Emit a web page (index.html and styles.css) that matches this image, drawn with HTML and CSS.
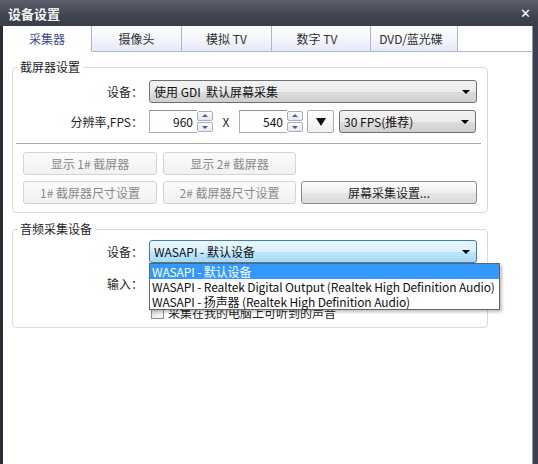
FILE: index.html
```html
<!DOCTYPE html>
<html>
<head>
<meta charset="utf-8">
<link rel="stylesheet" href="styles.css">
</head>
<body>
<div class="window">
  <div class="titlebar">
    <span class="title">设备设置</span>
    <span class="close">✕</span>
  </div>
  <div class="frame">
    <div class="tabs">
      <div class="tab t1 active">采集器</div>
      <div class="tab t2">摄像头</div>
      <div class="tab t3">模拟 TV</div>
      <div class="tab t4">数字 TV</div>
      <div class="tab t5">DVD/蓝光碟</div>
      <div class="tab-fill"></div>
    </div>
    <div class="panel">
      <fieldset class="group g1">
        <legend>截屏器设置</legend>
        <div class="row">
          <span class="lbl">设备：</span>
          <div class="combo wide">使用 GDI&nbsp; 默认屏幕采集<span class="arrow"></span></div>
        </div>
        <div class="row r2">
          <span class="lbl">分辨率,FPS：</span>
          <div class="spin">
            <div class="spin-input">960</div>
            <div class="spin-btns"><span class="sb up"></span><span class="sb dn"></span></div>
          </div>
          <span class="times">X</span>
          <div class="spin">
            <div class="spin-input">540</div>
            <div class="spin-btns"><span class="sb up"></span><span class="sb dn"></span></div>
          </div>
          <div class="dropbtn"><span class="tri"></span></div>
          <div class="combo fps">30 FPS(推荐)<span class="arrow"></span></div>
        </div>
        <div class="sep"></div>
        <div class="btnrow">
          <div class="btn dis b1">显示 1# 截屏器</div>
          <div class="btn dis b2">显示 2# 截屏器</div>
        </div>
        <div class="btnrow r-b2">
          <div class="btn dis b1">1# 截屏器尺寸设置</div>
          <div class="btn dis b2">2# 截屏器尺寸设置</div>
          <div class="btn b3">屏幕采集设置...</div>
        </div>
      </fieldset>
      <fieldset class="group g2">
        <legend>音频采集设备</legend>
        <div class="row">
          <span class="lbl">设备：</span>
          <div class="combo-wrap">
            <div class="combo wide focus">WASAPI - 默认设备<span class="arrow"></span></div>
            <ul class="droplist">
              <li class="sel">WASAPI - 默认设备</li>
              <li>WASAPI - Realtek Digital Output (Realtek High Definition Audio)</li>
              <li>WASAPI - 扬声器 (Realtek High Definition Audio)</li>
            </ul>
          </div>
        </div>
        <div class="row r-in">
          <span class="lbl">输入：</span>
        </div>
        <div class="check-row">
          <span class="checkbox"></span>
          <span class="check-text">采集在我的电脑上可听到的声音</span>
        </div>
      </fieldset>
    </div>
  </div>
</div>
</body>
</html>
```

FILE: styles.css
```css
html, body {
  margin: 0;
  padding: 0;
  background: #ffffff;
}
body {
  font-family: "Noto Sans CJK SC", "Noto Sans", sans-serif;
  font-size: 12px;
  color: #1e1e1e;
}
.window {
  width: 538px;
  height: 464px;
  display: flex;
  flex-direction: column;
  overflow: hidden;
}
.titlebar {
  height: 26px;
  flex: none;
  background: linear-gradient(#5b5f6c, #40444f 60%, #3a3e49);
  display: flex;
  align-items: center;
  justify-content: space-between;
  padding: 0 7px 0 8px;
  box-sizing: border-box;
}
.title {
  color: #f4f4f4;
  font-weight: bold;
  font-size: 13px;
}
.close {
  color: #ffffff;
  font-weight: bold;
  font-size: 13px;
  font-family: "DejaVu Sans", sans-serif;
}
.frame {
  flex: 1;
  background: #ffffff;
  border-left: 3px solid #2b2e37;
  border-right: 5px solid #3d414d;
  box-shadow: inset -1px 0 0 #8d93a3;
  display: flex;
  flex-direction: column;
}
.tabs {
  display: flex;
  height: 26px;
  flex: none;
}
.tab {
  box-sizing: border-box;
  height: 26px;
  border-right: 1px solid #aeb6cf;
  border-bottom: 1px solid #aeb6cf;
  background: linear-gradient(#ffffff, #f4f6fb 50%, #e6eaf5);
  display: flex;
  align-items: center;
  justify-content: center;
  color: #303030;
  font-size: 12px;
}
.tab.active {
  background: #ffffff;
  border-bottom-color: #ffffff;
  color: #3d4890;
}
.t1 { width: 89px; }
.t2 { width: 90px; }
.t3 { width: 90px; }
.t4 { width: 99px; padding-right: 8px; }
.t5 { width: 87px; padding-right: 6px; }
.tab-fill {
  flex: 1;
  border-bottom: 1px solid #aeb6cf;
}
.panel {
  flex: 1;
  padding: 0 0 0 9px;
}
.group {
  width: 476px;
  box-sizing: border-box;
  margin: 7px 0 0 0;
  border: 1px solid #d3dce2;
  border-radius: 4px;
  padding: 0 6px 8px 3px;
  min-width: 0;
}
.group legend {
  padding: 0 3px;
  margin-left: 1px;
  line-height: 16px;
  color: #1e1e1e;
}
.g1 .row:first-of-type { margin-top: 5px; }
.g2 { margin-top: 8px; }
.g2 .row:first-of-type { margin-top: 3px; }
.row {
  display: flex;
  align-items: center;
  height: 23px;
}
.r2 { margin-top: 7px; }
.lbl {
  width: 127px;
  text-align: right;
  flex: none;
  margin-right: 6px;
  color: #1e1e1e;
}
.combo {
  position: relative;
  box-sizing: border-box;
  height: 23px;
  border: 1px solid #707070;
  border-radius: 3px;
  background: linear-gradient(#f2f2f2, #ebebeb 50%, #dddddd 51%, #cfcfcf);
  display: flex;
  align-items: center;
  padding-left: 4px;
  color: #111;
}
.combo.wide { width: 328px; }
.combo.fps { width: 137px; margin-left: 5px; }
.combo.focus {
  border-color: #3c7fb1;
  background: linear-gradient(#eaf6fd, #d9f0fc 50%, #bee6fd 51%, #a7d9f5);
}
.arrow {
  position: absolute;
  right: 6px;
  top: 9px;
  width: 0;
  height: 0;
  border-left: 4px solid transparent;
  border-right: 4px solid transparent;
  border-top: 4px solid #000;
}
.spin {
  display: flex;
  height: 23px;
  flex: none;
}
.spin-input {
  box-sizing: border-box;
  width: 48px;
  height: 23px;
  border: 1px solid #abadb3;
  border-top-color: #8e9097;
  border-right: none;
  background: #fff;
  text-align: right;
  padding-right: 4px;
  line-height: 21px;
  color: #111;
}
.spin-btns {
  width: 16px;
  display: flex;
  flex-direction: column;
  gap: 1px;
  padding-top: 1px;
}
.sb {
  position: relative;
  box-sizing: border-box;
  height: 10px;
  border: 1px solid #a8aebc;
  border-radius: 2px;
  background: linear-gradient(#fbfcfe, #e3e8f2);
}
.sb::after {
  content: "";
  position: absolute;
  left: 4px;
  width: 0;
  height: 0;
  border-left: 3px solid transparent;
  border-right: 3px solid transparent;
}
.sb.up::after { top: 2px; border-bottom: 3px solid #4d6185; }
.sb.dn::after { top: 3px; border-top: 3px solid #4d6185; }
.times {
  width: 26px;
  text-align: center;
  flex: none;
  color: #1e1e1e;
}
.dropbtn {
  box-sizing: border-box;
  width: 27px;
  height: 23px;
  margin-left: 4px;
  border: 1px solid #acacac;
  border-radius: 2px;
  background: linear-gradient(#ffffff, #f0f0f0);
  display: flex;
  align-items: center;
  justify-content: center;
}
.tri {
  width: 0;
  height: 0;
  border-left: 5px solid transparent;
  border-right: 5px solid transparent;
  border-top: 8px solid #111;
}
.sep {
  margin-top: 10px;
  height: 0;
  border-top: 1px solid #a5a5a5;
  border-bottom: 1px solid #ffffff;
}
.btnrow {
  display: flex;
  margin-top: 7px;
  padding-left: 7px;
}
.btnrow.r-b2 { margin-top: 6px; }
.btn {
  box-sizing: border-box;
  height: 23px;
  border-radius: 3px;
  display: flex;
  align-items: center;
  justify-content: center;
  flex: none;
}
.btn.dis {
  border: 1px solid #d2d4d6;
  background: linear-gradient(#fbfbfb, #f1f1f1);
  color: #8a8a8a;
}
.b1 { width: 134px; }
.b2 { width: 133px; margin-left: 6px; }
.b3 {
  width: 176px;
  margin-left: 5px;
  border: 1px solid #8a8a8a;
  background: linear-gradient(#fbfbfb, #f0f0f0 50%, #e6e6e6 51%, #dcdcdc);
  color: #1e1e1e;
}
.combo-wrap {
  position: relative;
}
.droplist {
  position: absolute;
  left: 0;
  top: 23px;
  width: 351px;
  box-sizing: border-box;
  margin: 0;
  padding: 0;
  list-style: none;
  background: #ffffff;
  border: 1px solid #646464;
  box-shadow: 2px 2px 3px rgba(0, 0, 0, 0.25);
  z-index: 5;
}
.droplist li {
  height: 15px;
  line-height: 15px;
  padding-left: 2px;
  white-space: nowrap;
  letter-spacing: -0.12px;
  color: #111;
}
.droplist li.sel {
  background: #3399ff;
  color: #ffffff;
}
.r-in { margin-top: 9px; height: 22px; }
.check-row {
  display: flex;
  align-items: center;
  margin-top: 11px;
  height: 14px;
  padding-left: 135px;
}
.checkbox {
  box-sizing: border-box;
  width: 13px;
  height: 13px;
  border: 1px solid #8f8f8f;
  background: linear-gradient(135deg, #dcdcdc, #fbfbfb);
  margin-right: 4px;
  flex: none;
}
.check-text { color: #1e1e1e; }
```
